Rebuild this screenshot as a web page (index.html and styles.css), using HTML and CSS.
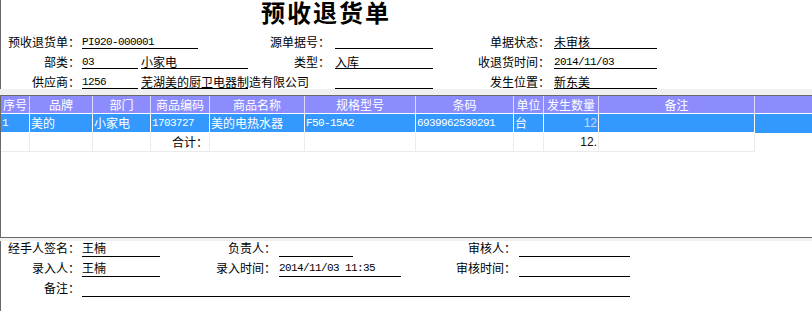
FILE: index.html
```html
<!DOCTYPE html>
<html lang="zh-CN">

<head>
    <meta charset="UTF-8">
    <title>预收退货单</title>
    <link rel="stylesheet" href="styles.css">
</head>

<body>
    <div class="head">
        <div class="title">预收退货单</div>
        <div class="form">
            <div class="lbl">预收退货单：</div>
            <div class="fields"><span class="fld num w116">PI920-000001</span></div>
            <div class="lbl c2">源单据号：</div>
            <div class="fields"><span class="fld full"></span></div>
            <div class="lbl c3">单据状态：</div>
            <div class="fields"><span class="fld full">未审核</span></div>

            <div class="lbl">部类：</div>
            <div class="fields"><span class="fld num w56">03</span><span class="fld full">小家电</span></div>
            <div class="lbl c2">类型：</div>
            <div class="fields"><span class="fld full">入库</span></div>
            <div class="lbl c3">收退货时间：</div>
            <div class="fields"><span class="fld num full">2014/11/03</span></div>

            <div class="lbl">供应商：</div>
            <div class="fields"><span class="fld num w56">1256</span><span class="fld full">芜湖美的厨卫电器制造有限公司</span></div>
            <div class="lbl c2"></div>
            <div class="fields"><span class="fld full"></span></div>
            <div class="lbl c3">发生位置：</div>
            <div class="fields"><span class="fld full">新东美</span></div>
        </div>
    </div>

    <div class="grid">
        <div class="row thead">
            <div class="cell">序号</div>
            <div class="cell">品牌</div>
            <div class="cell">部门</div>
            <div class="cell">商品编码</div>
            <div class="cell">商品名称</div>
            <div class="cell">规格型号</div>
            <div class="cell">条码</div>
            <div class="cell">单位</div>
            <div class="cell">发生数量</div>
            <div class="cell">备注</div>
            <div class="filler"></div>
        </div>
        <div class="row sel">
            <div class="cell num">1</div>
            <div class="cell">美的</div>
            <div class="cell">小家电</div>
            <div class="cell num">1703727</div>
            <div class="cell">美的电热水器</div>
            <div class="cell num">F50-15A2</div>
            <div class="cell num">6939962530291</div>
            <div class="cell">台</div>
            <div class="cell qty">12</div>
            <div class="cell"></div>
            <div class="filler"></div>
        </div>
        <div class="row total">
            <div class="cell"></div>
            <div class="cell"></div>
            <div class="cell"></div>
            <div class="cell right">合计：</div>
            <div class="cell"></div>
            <div class="cell"></div>
            <div class="cell"></div>
            <div class="cell"></div>
            <div class="cell qty">12.</div>
            <div class="cell"></div>
            <div class="filler"></div>
        </div>
    </div>

    <div class="foot-wrap">
        <div class="foot">
            <div class="lbl">经手人签名：</div>
            <div class="fields"><span class="fld full">王楠</span></div>
            <div class="lbl c2">负责人：</div>
            <div class="fields"><span class="fld w74"></span></div>
            <div class="lbl c2">审核人：</div>
            <div class="fields"><span class="fld full"></span></div>

            <div class="lbl">录入人：</div>
            <div class="fields"><span class="fld full">王楠</span></div>
            <div class="lbl c2">录入时间：</div>
            <div class="fields"><span class="fld num full">2014/11/03 11:35</span></div>
            <div class="lbl c2">审核时间：</div>
            <div class="fields"><span class="fld full"></span></div>

            <div class="lbl">备注：</div>
            <div class="fields span5"><span class="fld full"></span></div>
        </div>
    </div>
</body>

</html>
```

FILE: styles.css
```css
* {
    margin: 0;
    padding: 0;
    box-sizing: border-box;
}

body {
    width: 812px;
    height: 311px;
    overflow: hidden;
    background: #f0f0f0;
    font-family: "Noto Sans CJK SC", sans-serif;
    font-size: 12px;
    color: #000;
}

.num {
    font-family: "Liberation Mono", "Noto Sans CJK SC", monospace;
    font-size: 11px;
    letter-spacing: -0.6px;
}

/* 表头区域 */
.head {
    height: 89px;
    background: #fff;
    border-left: 1px solid #696969;
}

.title {
    width: 650px;
    height: 29px;
    line-height: 29px;
    text-align: center;
    font-size: 24px;
    font-weight: bold;
    letter-spacing: 2px;
    font-family: "Liberation Serif", "Noto Sans CJK SC", serif;
}

.form {
    display: grid;
    grid-template-columns: 81px 166px 87px 98px 121px 103px;
    grid-auto-rows: 20px;
}

.lbl {
    align-self: end;
    text-align: right;
    line-height: 12px;
    padding-right: 2px;
    padding-bottom: 1px;
    white-space: nowrap;
}

.form .c2 {
    padding-right: 5px;
}

.form .c3 {
    padding-right: 4px;
}

.fields {
    display: flex;
    align-items: flex-end;
    gap: 3px;
}

.fld {
    display: block;
    flex-shrink: 0;
    line-height: 12px;
    height: 13px;
    border-bottom: 1px solid #000;
    white-space: nowrap;
}

.full {
    flex: 1 1 0;
    min-width: 0;
}

.w116 {
    width: 116px;
}

.w56 {
    width: 56px;
}

.w74 {
    width: 74px;
}

/* 明细表格 */
.grid {
    margin-top: 6px;
    height: 142px;
    background: #fff;
    border-top: 1px solid #696969;
    border-left: 1px solid #696969;
}

.row {
    display: grid;
    grid-template-columns: 29px 63px 58px 59px 95px 111px 98px 30px 55px 156px 1fr;
}

.cell {
    border-right: 1px solid #fff;
    padding-left: 1px;
    white-space: nowrap;
    overflow: hidden;
}

.thead {
    height: 18px;
    line-height: 17px;
    background: #8c8cff;
    color: #fff;
    border-bottom: 1px solid #fff;
}

.thead .cell {
    text-align: center;
    padding-left: 0;
    border-right-color: #dcdcff;
}

.sel {
    height: 19px;
    line-height: 18px;
    background: #3399ff;
    color: #fff;
}

.sel .cell {
    border-bottom: 1px solid #fff;
}

.total {
    height: 19px;
    line-height: 18px;
}

.total .cell {
    border-right-color: #ebebeb;
    border-bottom: 1px solid #ebebeb;
}

.right {
    text-align: right;
    padding-right: 1px;
}

.qty {
    text-align: right;
    padding-right: 1px;
    font-family: "Liberation Sans", sans-serif;
}

.sel .qty {
    color: #d4d4ff;
}

.total .qty {
    color: #1a1206;
}

/* 签名区域 */
.foot-wrap {
    border-top: 1px solid #696969;
    padding-top: 3px;
}

.foot {
    height: 70px;
    background: #fff;
    border-left: 1px solid #696969;
    display: grid;
    grid-template-columns: 81px 78px 119px 122px 118px 111px;
    grid-template-rows: 16px 20px 20px;
}

.foot .c2 {
    padding-right: 3px;
}

.foot .lbl {
    padding-bottom: 2px;
    line-height: 14px;
}

.foot .fld {
    height: 16px;
    line-height: 14px;
    padding-bottom: 1px;
}

.span5 {
    grid-column: 2 / 7;
}
```
